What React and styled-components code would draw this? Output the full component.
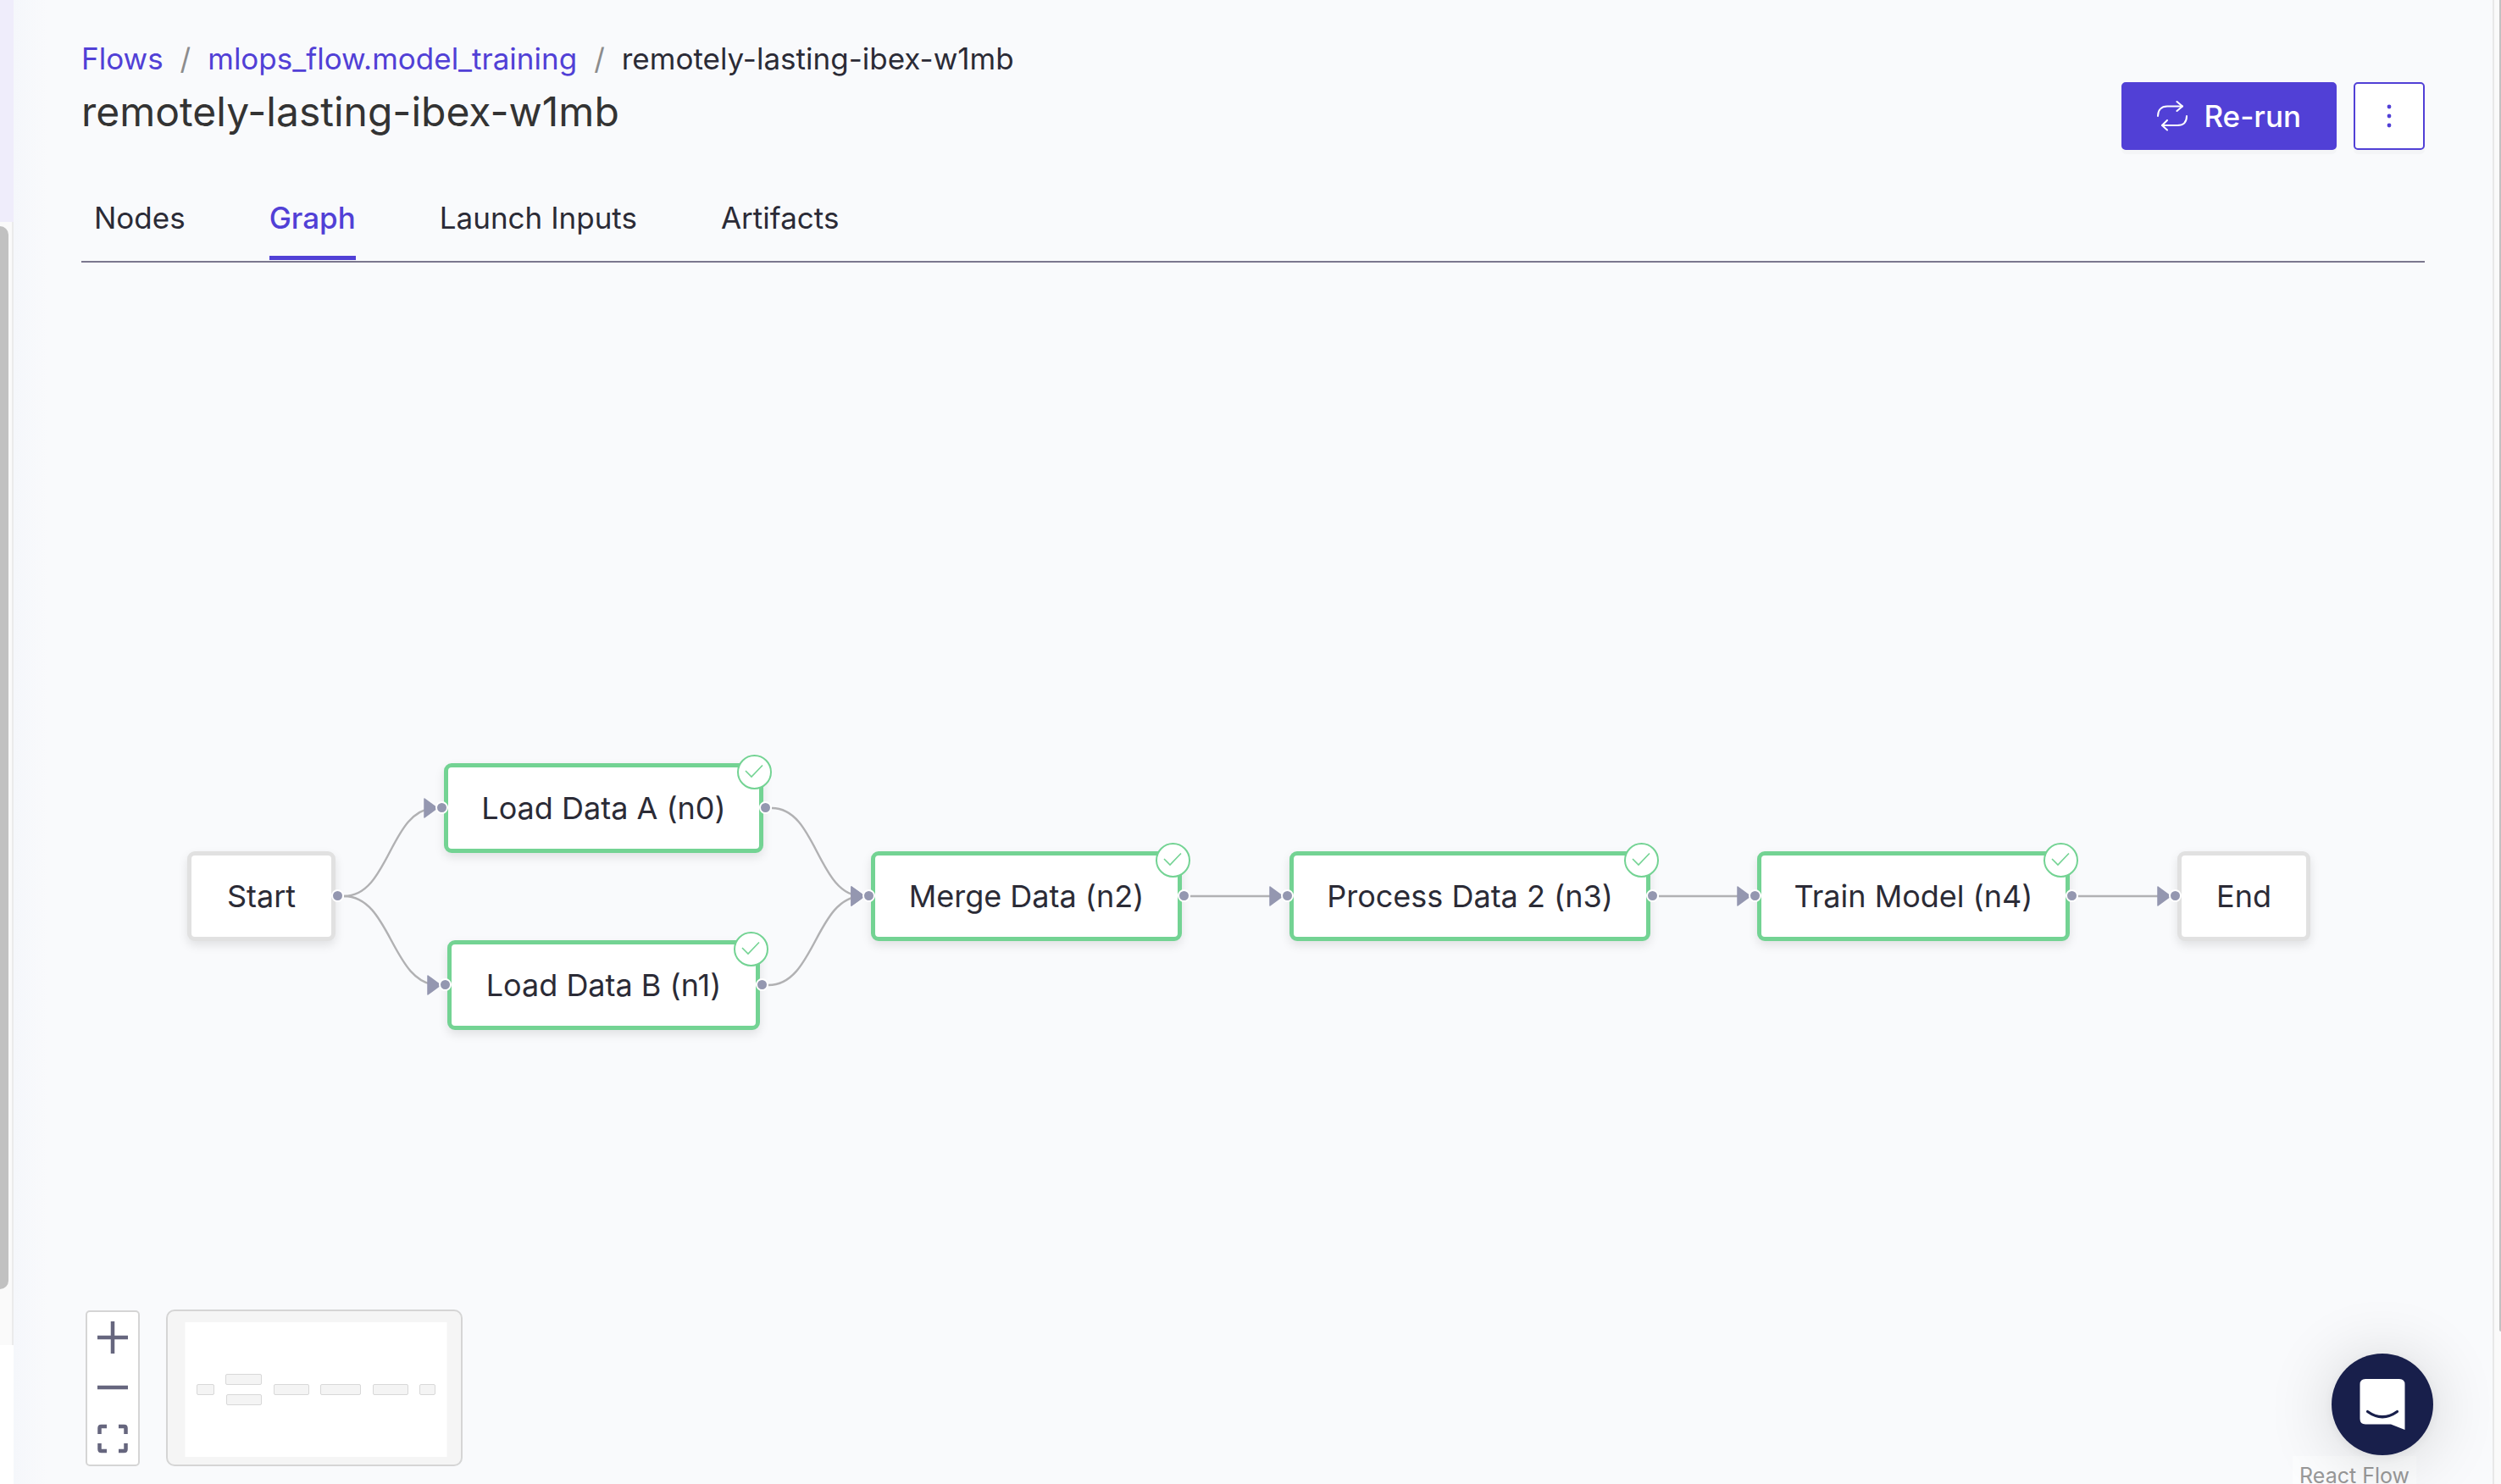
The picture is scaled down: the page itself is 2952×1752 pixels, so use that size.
import React from "react";
import styled, { createGlobalStyle } from "styled-components";

const color = {
  primary: "#5140d6",
  text: "#2b2b36",
  title: "#333333",
  muted: "#8c8c8c",
  page: "#f9fafc",
  rule: "#7b778e",
  success: "#73d393",
  idle: "#e1e1e1",
  handle: "#9497b0",
  edge: "#b1b1b3",
  panelLine: "#d5d5d5",
  icon: "#66667e",
};

const GlobalStyle = createGlobalStyle`
  *, *::before, *::after { box-sizing: border-box; }
  body {
    margin: 0;
    background: ${color.page};
    color: ${color.text};
    font-family: Inter, "Liberation Sans", sans-serif;
    font-size: 35px;
    line-height: 44px;
  }
  button { font: inherit; color: inherit; cursor: pointer; }
  svg { display: block; }
`;

const Shell = styled.div`
  display: flex;
  height: 100vh;
  overflow: hidden;
`;

const Sidebar = styled.aside`
  flex: 0 0 16px;
  display: flex;
  flex-direction: column;
  background: #ffffff;
`;

const ActiveItem = styled.div`
  flex: 0 0 262px;
  background: #efedfb;
`;

const SidebarTrack = styled.div`
  flex: 1;
  margin-bottom: 164px;
  padding: 5px 4px 66px 0;
  display: flex;
  background: #fafafa;
  border-right: 2px solid #ebebeb;
`;

const SidebarThumb = styled.div`
  flex: 1;
  background: #c1c1c1;
  border-radius: 0 10px 10px 0;
`;

const Main = styled.main`
  flex: 1;
  min-width: 0;
  display: flex;
  flex-direction: column;
  padding: 47px 80px 0;
  background: linear-gradient(to right, #f5f7fb, ${color.page} 40px);
`;

const PageTrack = styled.div`
  flex: 0 0 10px;
  display: flex;
  padding: 0 0 180px 6px;
  background: #fafafa;
  border-left: 2px solid #e8e8e8;
`;

const PageThumb = styled.div`
  flex: 1;
  background: #c1c1c1;
  border-radius: 0 0 0 4px;
`;

const Header = styled.header`
  display: flex;
  justify-content: space-between;
  align-items: flex-start;
  gap: 40px;
`;

const Crumbs = styled.nav`
  display: flex;
  gap: 20px;
`;

const CrumbLink = styled.a`
  color: ${color.primary};
  text-decoration: none;
`;

const Slash = styled.span`
  color: ${color.muted};
`;

const Title = styled.h1`
  margin: 9px 0 0;
  color: ${color.title};
  font-size: 48px;
  line-height: 64px;
  font-weight: 400;
`;

const Actions = styled.div`
  display: flex;
  gap: 20px;
  margin-top: 50px;
`;

const ActionButton = styled.button`
  display: flex;
  align-items: center;
  justify-content: center;
  gap: 19px;
  height: 80px;
  min-width: 84px;
  padding: 0 ${(p) => (p.$primary ? "40px" : "0")};
  border: 2px solid ${color.primary};
  border-radius: 5px;
  background: ${(p) => (p.$primary ? color.primary : "#ffffff")};
  color: ${(p) => (p.$primary ? "#ffffff" : color.primary)};
  font-weight: 500;
  box-shadow: 0 5px 0 rgba(0, 0, 0, 0.02);
`;

const Tabs = styled.div`
  display: flex;
  gap: 99px;
  margin-top: 57px;
  padding: 0 15px;
  border-bottom: 2px solid ${color.rule};
`;

const Tab = styled.button`
  height: 73px;
  margin-bottom: 1px;
  padding: 0 0 22px;
  border: 0;
  border-bottom: 5px solid ${(p) => (p.$active ? color.primary : "transparent")};
  background: none;
  color: ${(p) => (p.$active ? color.primary : color.text)};
  font-weight: ${(p) => (p.$active ? 500 : 400)};
`;

const Canvas = styled.section`
  position: relative;
  flex: 1;
  min-height: 0;
`;

const EdgeLayer = styled.svg`
  position: absolute;
  inset: 0;
  width: 100%;
  height: 100%;
  overflow: visible;
`;

const NodeBox = styled.div`
  position: absolute;
  left: ${(p) => p.$x}px;
  top: ${(p) => p.$y}px;
  width: ${(p) => p.$w}px;
  height: 106px;
  display: flex;
  align-items: center;
  justify-content: center;
  font-size: 36px;
  white-space: nowrap;
  background: #ffffff;
  border: 5px solid ${(p) => (p.$done ? color.success : color.idle)};
  border-radius: 9px;
  box-shadow: 0 5px 12px rgba(0, 0, 0, 0.1);
`;

const Handle = styled.span`
  position: absolute;
  top: 40px;
  ${(p) => p.$side}: -15px;
  width: 15px;
  height: 15px;
  border: 2px solid #ffffff;
  border-radius: 50%;
  background: ${color.handle};
`;

const Badge = styled.span`
  position: absolute;
  top: -15px;
  right: -15px;
  width: 41px;
  height: 41px;
  border: 2px solid ${color.success};
  border-radius: 50%;
  background: #ffffff;
`;

const BottomLeft = styled.div`
  position: absolute;
  left: 5px;
  bottom: 21px;
  display: flex;
  align-items: flex-end;
  gap: 31px;
`;

const Controls = styled.div`
  width: 64px;
  display: flex;
  flex-direction: column;
  background: #ffffff;
  border: 2px solid ${color.panelLine};
  border-radius: 5px;
`;

const ControlButton = styled.button`
  height: 60px;
  padding: 0;
  display: flex;
  align-items: center;
  justify-content: center;
  border: 0;
  background: none;
`;

const MiniMap = styled.div`
  width: 350px;
  height: 185px;
  background: #f5f5f5;
  border: 2px solid ${color.panelLine};
  border-radius: 10px;
  overflow: hidden;
`;

const Attribution = styled.a`
  position: absolute;
  right: 10px;
  bottom: -5px;
  padding: 8px 8px 0;
  background: rgba(255, 255, 255, 0.5);
  color: #999999;
  font-size: 25px;
  line-height: 30px;
  text-decoration: none;
`;

const ChatButton = styled.button`
  position: fixed;
  right: 80px;
  bottom: 34px;
  width: 120px;
  height: 120px;
  padding: 0;
  border: 0;
  border-radius: 50%;
  background: #181f4b;
  box-shadow: 0 3px 15px rgba(0, 0, 0, 0.06), 0 5px 80px rgba(0, 0, 0, 0.16);
`;

const NODES = [
  { id: "start", label: "Start", x: 125, y: 695, w: 175, out: true },
  { id: "n0", label: "Load Data A (n0)", x: 428, y: 591, w: 377, done: true, in: true, out: true },
  { id: "n1", label: "Load Data B (n1)", x: 432, y: 800, w: 369, done: true, in: true, out: true },
  { id: "n2", label: "Merge Data (n2)", x: 932, y: 695, w: 367, done: true, in: true, out: true },
  { id: "n3", label: "Process Data 2 (n3)", x: 1426, y: 695, w: 426, done: true, in: true, out: true },
  { id: "n4", label: "Train Model (n4)", x: 1978, y: 695, w: 369, done: true, in: true, out: true },
  { id: "end", label: "End", x: 2474, y: 695, w: 157, in: true },
];

const EDGES = [
  ["start", "n0"],
  ["start", "n1"],
  ["n0", "n2"],
  ["n1", "n2"],
  ["n2", "n3"],
  ["n3", "n4"],
  ["n4", "end"],
];

const MINI_NODES = [
  [35, 86, 20],
  [69, 74, 42],
  [70, 98, 41],
  [126, 86, 41],
  [181, 86, 47],
  [243, 86, 41],
  [298, 86, 18],
];

const byId = Object.fromEntries(NODES.map((n) => [n.id, n]));

function Edge({ from, to }) {
  const a = byId[from];
  const b = byId[to];
  const sx = a.x + a.w + 10;
  const sy = a.y + 53;
  const tx = b.x - 10;
  const ty = b.y + 53;
  const mid = (sx + tx) / 2;
  return (
    <g>
      <path
        d={`M${sx},${sy} C${mid},${sy} ${mid},${ty} ${tx},${ty}`}
        fill="none"
        stroke={color.edge}
        strokeWidth="2.4"
      />
      <path
        d={`M${tx - 13},${ty - 11} L${tx + 2},${ty} L${tx - 13},${ty + 11} Z`}
        fill={color.handle}
        stroke={color.handle}
        strokeWidth="1.5"
        strokeLinejoin="round"
      />
    </g>
  );
}

function FlowNode({ node }) {
  return (
    <NodeBox $x={node.x} $y={node.y} $w={node.w} $done={node.done}>
      {node.label}
      {node.in && <Handle $side="left" />}
      {node.out && <Handle $side="right" />}
      {node.done && (
        <Badge>
          <svg width="37" height="37" viewBox="0 0 37 37" fill="none" stroke={color.success} strokeWidth="1.6">
            <path d="M8 17 L15 24 L28 10.5" />
          </svg>
        </Badge>
      )}
    </NodeBox>
  );
}

const RerunIcon = () => (
  <svg width="36" height="36" viewBox="0 0 36 36" fill="none" stroke="#ffffff" strokeWidth="2" strokeLinecap="round" strokeLinejoin="round">
    <path d="M1 18 C1 11 5 6.500 12 6.500 H30" />
    <path d="M23.500 1 L30 6.500 L23.500 12" />
    <path d="M35 18 C35 25 31 29 24 29 H6" />
    <path d="M12 23 L6 29 L12 34.500" />
  </svg>
);

const KebabIcon = () => (
  <svg width="6" height="28" viewBox="0 0 6 28" fill={color.primary}>
    <circle cx="3" cy="3" r="2.400" />
    <circle cx="3" cy="14" r="2.400" />
    <circle cx="3" cy="25" r="2.400" />
  </svg>
);

const ChatIcon = () => (
  <svg width="120" height="120" viewBox="0 0 120 120">
    <path d="M40 30 H80 Q86.500 30 86.500 36.500 V90 L70 83.500 H40 Q33.500 83.500 33.500 77 V36.500 Q33.500 30 40 30 Z" fill="#ffffff" />
    <path d="M42.500 68.500 Q60 81 77.500 68.500" fill="none" stroke="#181f4b" strokeWidth="3.200" strokeLinecap="round" />
  </svg>
);

const controlIcons = {
  "Zoom in": <path d="M0 18 H36 M18 -1 V37" />,
  "Zoom out": <path d="M0 17 H36" />,
  "Fit view": (
    <path d="M2.500 12 V5 Q2.500 3 4.500 3 H11 M25 3 H31.500 Q33.500 3 33.500 5 V12 M33.500 23 V30 Q33.500 32 31.500 32 H25 M11 32 H4.500 Q2.500 32 2.500 30 V23" />
  ),
};

export default function App() {
  return (
    <>
      <GlobalStyle />
      <Shell>
        <Sidebar>
          <ActiveItem />
          <SidebarTrack>
            <SidebarThumb />
          </SidebarTrack>
        </Sidebar>
        <Main>
          <Header>
            <div>
              <Crumbs aria-label="Breadcrumb">
                <CrumbLink href="#flows">Flows</CrumbLink>
                <Slash>/</Slash>
                <CrumbLink href="#flow">mlops_flow.model_training</CrumbLink>
                <Slash>/</Slash>
                <span>remotely-lasting-ibex-w1mb</span>
              </Crumbs>
              <Title>remotely-lasting-ibex-w1mb</Title>
            </div>
            <Actions>
              <ActionButton $primary type="button">
                <RerunIcon />
                Re-run
              </ActionButton>
              <ActionButton type="button" aria-label="More actions">
                <KebabIcon />
              </ActionButton>
            </Actions>
          </Header>
          <Tabs role="tablist">
            {["Nodes", "Graph", "Launch Inputs", "Artifacts"].map((name) => (
              <Tab key={name} type="button" role="tab" aria-selected={name === "Graph"} $active={name === "Graph"}>
                {name}
              </Tab>
            ))}
          </Tabs>
          <Canvas aria-label="Flow graph">
            <EdgeLayer>
              {EDGES.map(([from, to]) => (
                <Edge key={from + to} from={from} to={to} />
              ))}
            </EdgeLayer>
            {NODES.map((node) => (
              <FlowNode key={node.id} node={node} />
            ))}
            <BottomLeft>
              <Controls>
                {Object.entries(controlIcons).map(([label, icon]) => (
                  <ControlButton key={label} type="button" aria-label={label}>
                    <svg width="36" height="36" viewBox="0 0 36 36" fill="none" stroke={color.icon} strokeWidth="4.500" overflow="visible">
                      {icon}
                    </svg>
                  </ControlButton>
                ))}
              </Controls>
              <MiniMap>
                <svg width="346" height="181" viewBox="0 0 346 181">
                  <rect x="20.500" y="13" width="309" height="159" fill="#ffffff" />
                  {MINI_NODES.map(([x, y, w]) => (
                    <rect key={`${x}-${y}`} x={x - 0.5} y={y + 0.5} width={w} height="12" rx="1.500" fill="#f4f4f4" stroke="#d8d8d8" />
                  ))}
                </svg>
              </MiniMap>
            </BottomLeft>
            <Attribution href="#react-flow">React Flow</Attribution>
          </Canvas>
        </Main>
        <PageTrack>
          <PageThumb />
        </PageTrack>
      </Shell>
      <ChatButton type="button" aria-label="Open chat">
        <ChatIcon />
      </ChatButton>
    </>
  );
}
